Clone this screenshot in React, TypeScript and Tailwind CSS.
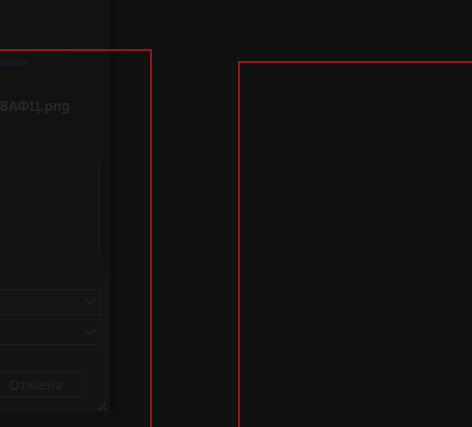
import React from "react";

function Chevron() {
  return (
    <svg width="12" height="8" viewBox="0 0 12 8" fill="none">
      <path d="M1 1.5L6 6L11 1.5" stroke="#242424" strokeWidth="1.6" />
    </svg>
  );
}

export default function App() {
  return (
    <div
      className="relative w-[472px] h-[427px] overflow-hidden bg-[#111111]"
      style={{ fontFamily: '"Noto Sans", "Open Sans", sans-serif' }}
    >
      {/* dialog */}
      <div className="absolute left-[-300px] top-[-20px] w-[410px] h-[433px] bg-[#121212] rounded-[4px] shadow-[4px_0_6px_rgba(0,0,0,0.3)] flex flex-col">
        <div className="flex-1 flex flex-col px-[8px] pt-[70px]">
          <div className="flex justify-end pr-[34px]">
            <div className="relative w-[160px] h-[40px] bg-[#131313] border-t-[2px] border-[#171717]">
              <div className="absolute right-[41px] top-[9px] w-[60px] h-[4px] bg-[#131b22]" />
              <div className="absolute right-[0px] top-[18px] w-[120px] h-[1px] bg-[#161616]" />
              <div className="absolute right-[0px] top-[28px] w-[120px] h-[1px] bg-[#151515]" />
            </div>
          </div>
          <div className="mt-[7px] flex justify-end pr-[32px] text-[13.5px] leading-[18px] font-bold text-[#262626]">
            ИВАФЦ.png
          </div>
          <div className="flex-1 flex justify-end pr-[2px] pt-[47px]">
            <div className="w-[2px] h-[92px] bg-[#1a1a1a] rounded-full" />
          </div>
        </div>
        <div className="h-[138px] bg-[#141414] border-t border-[#161616] flex flex-col items-end pl-[8px] pr-[8px] pt-[13px]">
          <div className="w-[300px] h-[26px] border border-[#1f1f1f] bg-[#151515] flex items-center justify-end pr-[5px]">
            <Chevron />
          </div>
          <div className="mt-[4px] w-[300px] h-[26px] border border-[#1b1b1b] bg-[#141414] flex items-center justify-end pr-[5px]">
            <Chevron />
          </div>
          <div className="mt-[26px] flex pr-[16px]">
            <div className="w-[100px] h-[27px] rounded-[4px] border border-[#1d1d1d] flex items-center justify-center text-[14px] font-semibold text-[#221f1f]">
              Отмена
            </div>
          </div>
          <div className="flex-1" />
        </div>
        <div className="absolute right-[4px] bottom-[3px] grid grid-cols-3 gap-[1px]">
          <span className="w-[2px] h-[2px]" />
          <span className="w-[2px] h-[2px]" />
          <span className="w-[2px] h-[2px] bg-[#252525]" />
          <span className="w-[2px] h-[2px]" />
          <span className="w-[2px] h-[2px] bg-[#252525]" />
          <span className="w-[2px] h-[2px] bg-[#252525]" />
          <span className="w-[2px] h-[2px] bg-[#252525]" />
          <span className="w-[2px] h-[2px] bg-[#252525]" />
          <span className="w-[2px] h-[2px] bg-[#252525]" />
        </div>
      </div>

      {/* selection frames */}
      <div className="absolute left-[-10px] top-[49px] w-[162px] h-[400px] border-2 border-[#9a1616]" />
      <div className="absolute left-[238px] top-[61px] w-[260px] h-[400px] border-2 border-[#9a1616]" />
    </div>
  );
}
